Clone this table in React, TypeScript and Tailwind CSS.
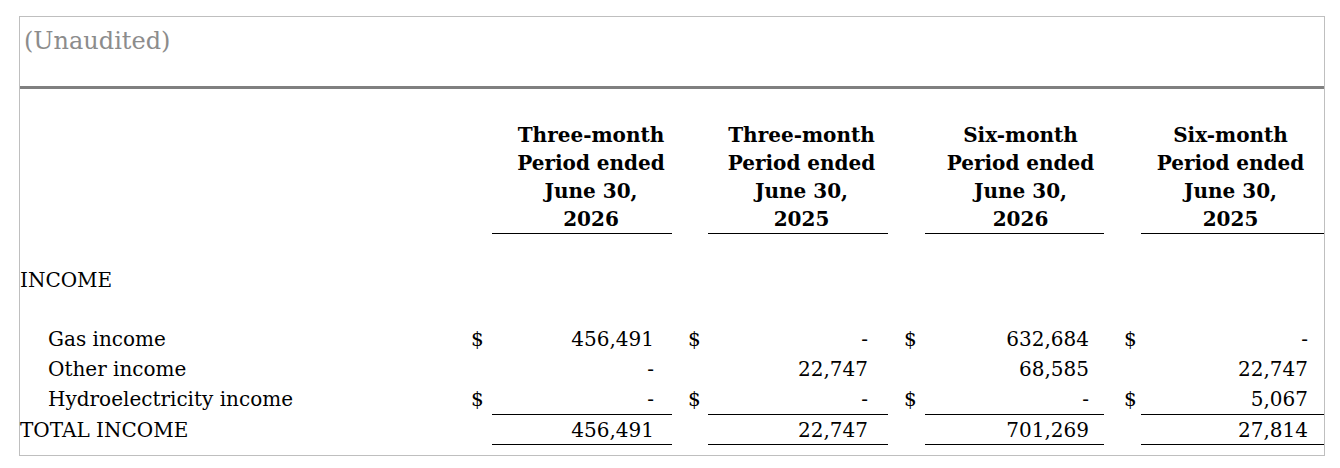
import React from "react";

const F = { fontFamily: '"DejaVu Serif", "Liberation Serif", serif' };

type Cell = { d?: string; v: string };

const dW = ["w-[36px]", "w-[36px]", "w-[37px]", "w-[37px]"];
const dPl = ["pl-[15px]", "pl-[16px]", "pl-[16px]", "pl-[20px]"];
const vW = ["w-[180px]", "w-[180px]", "w-[179px]", "flex-1"];
const vPr = ["pr-[18px]", "pr-[20px]", "pr-[15px]", "pr-[16px]"];
const hPad = ["pl-[18px]", "pl-[7px]", "pl-[12px]", "pr-[4px]"];

const headers = [
  ["Three-month", "Period ended", "June 30,", "2026"],
  ["Three-month", "Period ended", "June 30,", "2025"],
  ["Six-month", "Period ended", "June 30,", "2026"],
  ["Six-month", "Period ended", "June 30,", "2025"],
];

function DataRow({
  label,
  indent,
  cells,
  rowClass,
  lead,
  underline,
}: {
  label: string;
  indent: boolean;
  cells: Cell[];
  rowClass: string;
  lead: string;
  underline: boolean;
}) {
  return (
    <div className={`flex ${rowClass} ${lead}`}>
      <div className={`w-[436px] whitespace-nowrap ${indent ? "pl-[28px]" : "pl-0"}`}>{label}</div>
      {cells.map((c, i) => (
        <React.Fragment key={i}>
          <div className={`${dW[i]} ${dPl[i]} whitespace-nowrap`}>{c.d ?? ""}</div>
          <div
            className={`${vW[i]} ${vPr[i]} text-right whitespace-nowrap ${
              underline ? "border-b border-black" : ""
            }`}
          >
            {c.v}
          </div>
        </React.Fragment>
      ))}
    </div>
  );
}

export default function App() {
  return (
    <div className="w-[1340px] h-[468px] bg-white overflow-hidden pt-[16px] pl-[19px]" style={F}>
      <div className="w-[1306px] h-[440px] border border-[#bfbfbf] flex flex-col text-[20px] text-black">
        <div className="h-[69px] pl-[4px] pt-[10px] text-[24px] leading-[28px] text-[#8c8c8c]">
          (Unaudited)
        </div>
        <div className="h-[3px] bg-[#808080]" />

        {/* header */}
        <div className="flex pt-[32px] font-bold leading-[28px]">
          <div className="w-[436px]" />
          {headers.map((h, i) => (
            <React.Fragment key={i}>
              <div className={dW[i]} />
              <div className={`${vW[i]} ${hPad[i]} text-center border-b border-black`}>
                {h.map((l, j) => (
                  <div key={j} className="whitespace-nowrap">
                    {l}
                  </div>
                ))}
              </div>
            </React.Fragment>
          ))}
        </div>

        <div className="mt-[33px] leading-[27px] whitespace-nowrap">INCOME</div>

        <DataRow
          label="Gas income"
          indent
          rowClass="mt-[30px]"
          lead="leading-[30px]"
          underline={false}
          cells={[
            { d: "$", v: "456,491" },
            { d: "$", v: "-" },
            { d: "$", v: "632,684" },
            { d: "$", v: "-" },
          ]}
        />
        <DataRow
          label="Other income"
          indent
          rowClass="mt-0"
          lead="leading-[30px]"
          underline={false}
          cells={[{ v: "-" }, { v: "22,747" }, { v: "68,585" }, { v: "22,747" }]}
        />
        <DataRow
          label="Hydroelectricity income"
          indent
          rowClass="mt-0"
          lead="leading-[30px]"
          underline
          cells={[
            { d: "$", v: "-" },
            { d: "$", v: "-" },
            { d: "$", v: "-" },
            { d: "$", v: "5,067" },
          ]}
        />
        <DataRow
          label="TOTAL INCOME"
          indent={false}
          rowClass="pt-[2px]"
          lead="leading-[27px]"
          underline
          cells={[{ v: "456,491" }, { v: "22,747" }, { v: "701,269" }, { v: "27,814" }]}
        />
      </div>
    </div>
  );
}
